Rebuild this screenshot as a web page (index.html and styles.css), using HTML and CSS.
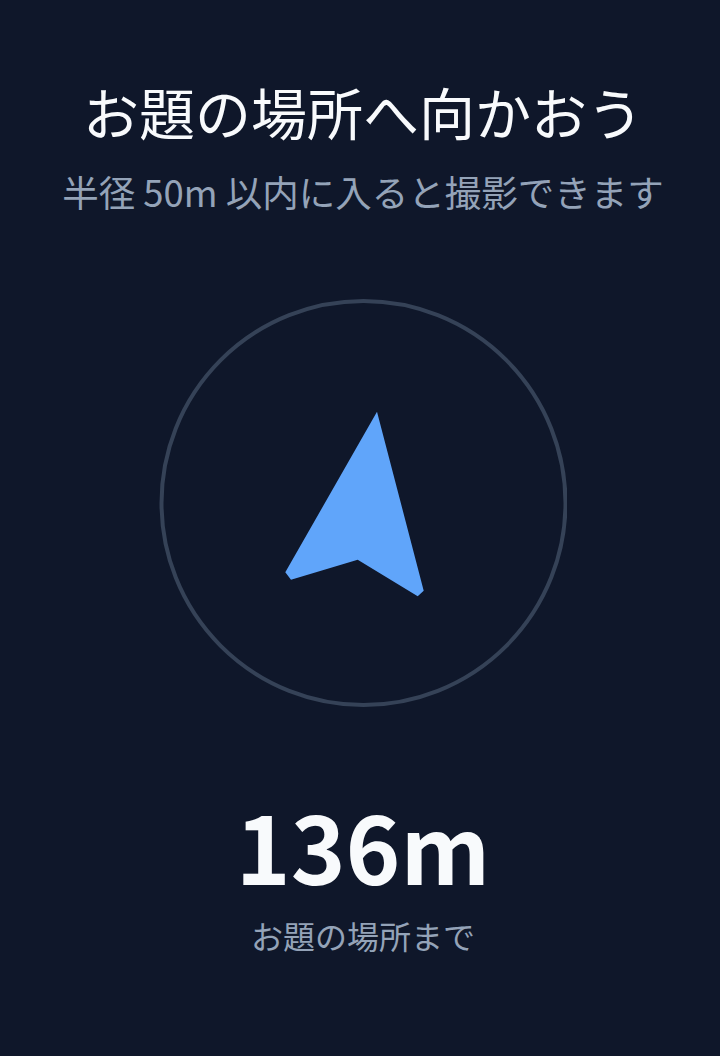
FILE: index.html
```html
<!DOCTYPE html>
<html lang="ja">
<head>
<meta charset="utf-8">
<title>お題の場所へ向かおう</title>
<link rel="stylesheet" href="styles.css">
</head>
<body>
<main class="screen">
  <header class="head">
    <h1 class="title">お題の場所へ向かおう</h1>
    <p class="subtitle">半径 50m 以内に入ると撮影できます</p>
  </header>
  <div class="compass">
    <svg class="compass-svg" width="408" height="408" viewBox="0 0 408 408" aria-hidden="true">
      <circle cx="204.5" cy="204" r="202" fill="none" stroke="#354257" stroke-width="4"/>
      <polygon points="218,112.7 264.7,291.7 258.7,297.3 198.7,260.7 132,280.7 126.3,273.3" fill="#60a5fa"/>
    </svg>
  </div>
  <div class="distance">
    <div class="distance-value">136m</div>
    <div class="distance-label">お題の場所まで</div>
  </div>
</main>
</body>
</html>
```

FILE: styles.css
```css
html, body {
  margin: 0;
  padding: 0;
  background: #0f172a;
}
body {
  font-family: "Noto Sans CJK JP", "Noto Sans", sans-serif;
  color: #f8fafc;
  width: 720px;
  height: 1056px;
  overflow: hidden;
}
.screen {
  display: flex;
  flex-direction: column;
  align-items: center;
  padding: 71px 0 0 6px;
}
.head {
  display: flex;
  flex-direction: column;
  align-items: center;
}
.title {
  margin: 0;
  font-size: 56px;
  font-weight: 400;
  line-height: 80px;
  color: #f8fafc;
  white-space: nowrap;
}
.subtitle {
  margin: 21px 0 0;
  font-size: 36.5px;
  font-weight: 400;
  line-height: 40px;
  color: #94a3b8;
  white-space: nowrap;
}
.compass {
  margin-top: 87px;
  width: 408px;
  height: 408px;
}
.compass-svg {
  display: block;
}
.distance {
  margin-top: 83px;
  display: flex;
  flex-direction: column;
  align-items: center;
}
.distance-value {
  font-size: 93px;
  font-weight: 700;
  line-height: 110px;
  color: #f8fafc;
}
.distance-label {
  margin-top: 15px;
  font-size: 32px;
  line-height: 40px;
  color: #94a3b8;
}
```
